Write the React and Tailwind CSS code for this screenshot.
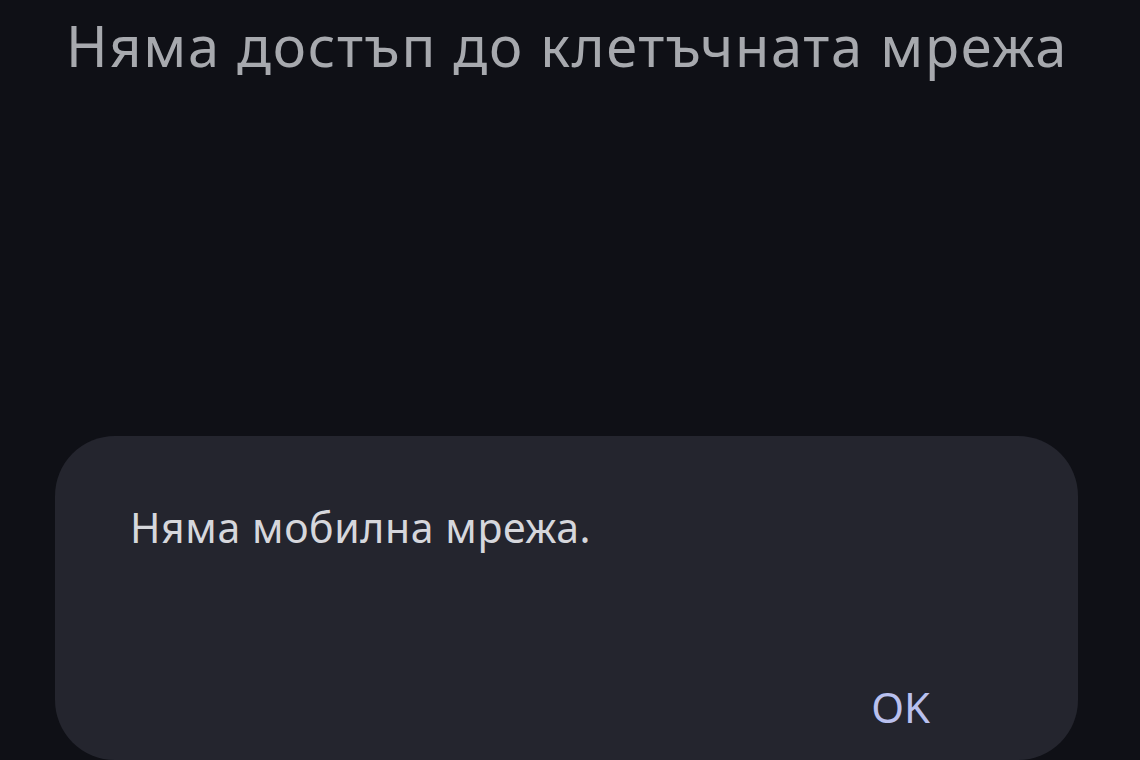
export default function App() {
  return (
    <div lang="bg" className="w-[1140px] h-[760px] overflow-hidden bg-[#0f1016] flex flex-col font-['Noto_Sans',sans-serif]">
      <h1 className="pl-[66px] pt-[9px] text-[56px] leading-[72px] text-[#a7a9ae] font-normal tracking-[1.7px]">
        Няма достъп до клетъчната мрежа
      </h1>
      <div className="mt-[355px] ml-[55px] mr-[62px] h-[400px] rounded-[60px] bg-[#24252e] pl-[75px] pr-[148px] pt-[63px] flex flex-col">
        <p className="text-[41px] leading-[56px] text-[#d6d7dc] tracking-[0.6px]">Няма мобилна мрежа.</p>
        <div className="flex justify-end mt-[124px]">
          <button className="text-[42px] leading-[56px] text-[#b9c0ee]">OK</button>
        </div>
      </div>
    </div>
  );
}
